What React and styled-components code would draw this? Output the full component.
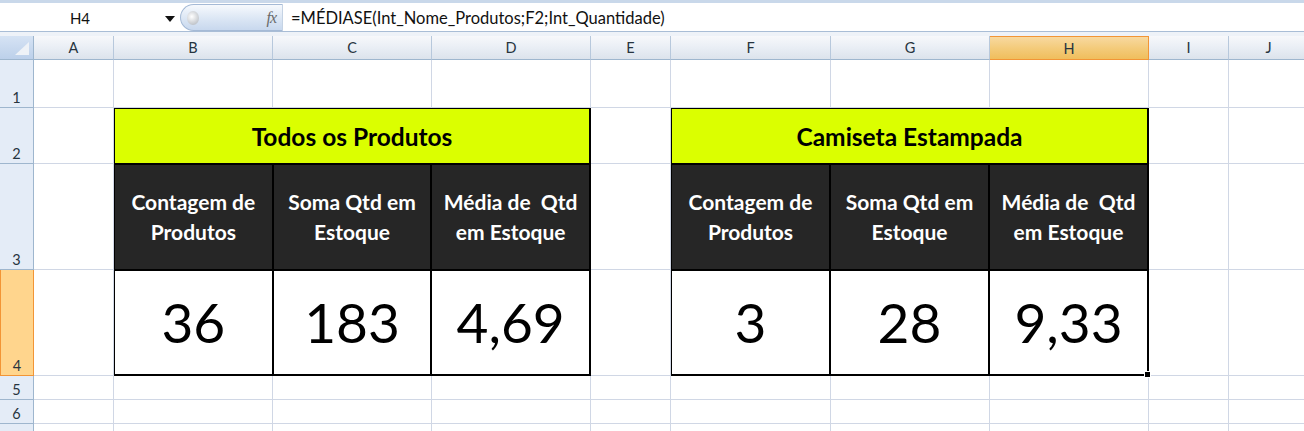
import React from 'react'
import styled, { createGlobalStyle, css } from 'styled-components'

const GlobalStyle = createGlobalStyle`
  html, body {
    margin: 0;
    padding: 0;
    background: #ffffff;
    overflow: hidden;
  }
  body {
    font-family: Lato, "Open Sans", "Liberation Sans", sans-serif;
  }
`

const Window = styled.div`
  width: 1304px;
  height: 431px;
  overflow: hidden;
  background: #ffffff;
`

const FormulaBar = styled.div`
  height: 36px;
  box-sizing: border-box;
  border-top: 3px solid #c9d8ea;
  background: #eef2f8;
  padding-bottom: 4px;
  display: flex;
`

const BarInner = styled.div`
  flex: 1;
  display: flex;
  align-items: center;
  background: #ffffff;
  border-bottom: 1px solid #a9bdd6;
  padding-top: 1px;
`

const NameBox = styled.div`
  width: 160px;
  text-align: center;
  font-size: 15px;
  color: #111;
`

const Dropdown = styled.div`
  width: 0;
  height: 0;
  border-left: 5px solid transparent;
  border-right: 5px solid transparent;
  border-top: 6px solid #111;
  margin: 2px 5px 0 5px;
`

const FxPill = styled.div`
  width: 102px;
  height: 27px;
  box-sizing: border-box;
  border: 1px solid #a5bad6;
  border-right: none;
  border-radius: 14px 0 0 14px;
  background: linear-gradient(#f6f9fd, #dbe6f4 55%, #c8d8ee);
  display: flex;
  align-items: center;
  justify-content: space-between;
  padding: 0 6px 0 6px;
`

const Knob = styled.div`
  width: 12px;
  height: 14px;
  border-radius: 50%;
  background: radial-gradient(circle at 40% 40%, #ffffff, #c4c8cd 70%, #a9adb3);
`

const Fx = styled.span`
  font-family: "Liberation Serif", serif;
  font-style: italic;
  font-size: 16px;
  color: #6a6a6a;
  letter-spacing: -1px;
`

const FormulaText = styled.div`
  flex: 1;
  height: 27px;
  display: flex;
  align-items: center;
  border-left: 1px solid #c5d3e4;
  padding-left: 8px;
  font-size: 16.5px;
  color: #111;
  white-space: nowrap;
`

const Sheet = styled.div`
  display: grid;
  grid-template-columns: 34px 80px 159px 159px 159px 80px 160px 159px 159px 80px 80px;
  grid-template-rows: 24px 48px 56px 106px 106px 24px 24px 24px;
`

const Corner = styled.div`
  box-sizing: border-box;
  border-right: 1px solid #9eb6ce;
  border-bottom: 1px solid #9eb6ce;
  background: linear-gradient(#d6e3f4, #bcd0ea);
  position: relative;
  &::after {
    content: '';
    position: absolute;
    right: 4px;
    bottom: 4px;
    width: 0;
    height: 0;
    border-left: 14px solid transparent;
    border-bottom: 13px solid #eef2f7;
  }
`

const ColHeader = styled.div`
  box-sizing: border-box;
  border-right: 1px solid #b7c8dc;
  border-bottom: 1px solid #9eb6ce;
  background: linear-gradient(#f7f8fb, #e8edf4 55%, #dce3ec);
  display: flex;
  align-items: center;
  justify-content: center;
  font-size: 14.5px;
  color: #27343f;
  ${p => p.$active && css`
    background: linear-gradient(#f8d9a0, #f3ca78 55%, #f0be5c);
    border: 1px solid #f29536;
    border-left: none;
  `}
`

const RowHeader = styled.div`
  box-sizing: border-box;
  border-right: 1px solid #9eb6ce;
  border-bottom: 1px solid #9eb6ce;
  background: #e4ecf7;
  display: flex;
  align-items: flex-end;
  justify-content: center;
  padding-bottom: 1px;
  font-size: 14.5px;
  color: #27343f;
  ${p => p.$active && css`
    background: #ffd58d;
    border: 1px solid #f29536;
    border-top: none;
  `}
`

const Cell = styled.div`
  box-sizing: border-box;
  border-right: 1px solid #d0d7e5;
  border-bottom: 1px solid #d0d7e5;
`

const TableBlock = styled.div`
  grid-column: ${p => p.$col} / span 3;
  grid-row: 3 / span 3;
  margin: -1px 0 0 -1px;
  background: #000;
  padding: 2px;
  display: grid;
  grid-template-columns: 1fr 1fr 1fr;
  grid-template-rows: 54px 104px 1fr;
  gap: 2px;
`

const Title = styled.div`
  grid-column: 1 / span 3;
  background: #dbff00;
  display: flex;
  align-items: center;
  justify-content: center;
  font-weight: 700;
  font-size: 24.5px;
  color: #000;
`

const HeadCell = styled.div`
  background: #262626;
  color: #ffffff;
  display: flex;
  align-items: center;
  justify-content: center;
  text-align: center;
  white-space: pre;
  font-weight: 700;
  font-size: 21px;
  line-height: 30px;
`

const ValueCell = styled.div`
  position: relative;
  background: #ffffff;
  display: flex;
  align-items: center;
  justify-content: center;
  font-size: 55px;
  color: #000;
  padding-bottom: 2px;
`

const FillHandle = styled.div`
  position: absolute;
  right: -4px;
  bottom: -4px;
  width: 5px;
  height: 5px;
  background: #000;
  border: 1px solid #fff;
`

const columns = ['A', 'B', 'C', 'D', 'E', 'F', 'G', 'H', 'I', 'J']

const tables = [
  {
    col: 3,
    title: 'Todos os Produtos',
    values: ['36', '183', '4,69'],
  },
  {
    col: 7,
    title: 'Camiseta Estampada',
    values: ['3', '28', '9,33'],
    selected: 2,
  },
]

const heads = [
  'Contagem de\nProdutos',
  'Soma Qtd em\nEstoque',
  'Média de  Qtd\nem Estoque',
]

// cells covered by the two table blocks (rows 2-4, cols B-D and F-H)
const covered = (row, colIdx) =>
  row >= 2 && row <= 4 && ((colIdx >= 1 && colIdx <= 3) || (colIdx >= 5 && colIdx <= 7))

export default function App() {
  const rows = [1, 2, 3, 4, 5, 6, 7]
  return (
    <Window>
      <GlobalStyle />
      <FormulaBar>
        <BarInner>
          <NameBox>H4</NameBox>
          <Dropdown />
          <FxPill>
            <Knob />
            <Fx>fx</Fx>
          </FxPill>
          <FormulaText>=MÉDIASE(Int_Nome_Produtos;F2;Int_Quantidade)</FormulaText>
        </BarInner>
      </FormulaBar>
      <Sheet>
        {tables.map(t => (
          <TableBlock key={t.title} $col={t.col}>
            <Title>{t.title}</Title>
            {heads.map((h, i) => (
              <HeadCell key={i}>{h}</HeadCell>
            ))}
            {t.values.map((v, i) => (
              <ValueCell key={i}>
                {v}
                {t.selected === i && <FillHandle />}
              </ValueCell>
            ))}
          </TableBlock>
        ))}
        <Corner />
        {columns.map(c => (
          <ColHeader key={c} $active={c === 'H'}>{c}</ColHeader>
        ))}
        {rows.map(r => (
          <React.Fragment key={r}>
            {/* row 7 is cut by the window edge, its number is not visible */}
            <RowHeader $active={r === 4}>{r < 7 ? r : ''}</RowHeader>
            {columns.map((c, i) => (covered(r, i) ? null : <Cell key={c} />))}
          </React.Fragment>
        ))}
      </Sheet>
    </Window>
  )
}
